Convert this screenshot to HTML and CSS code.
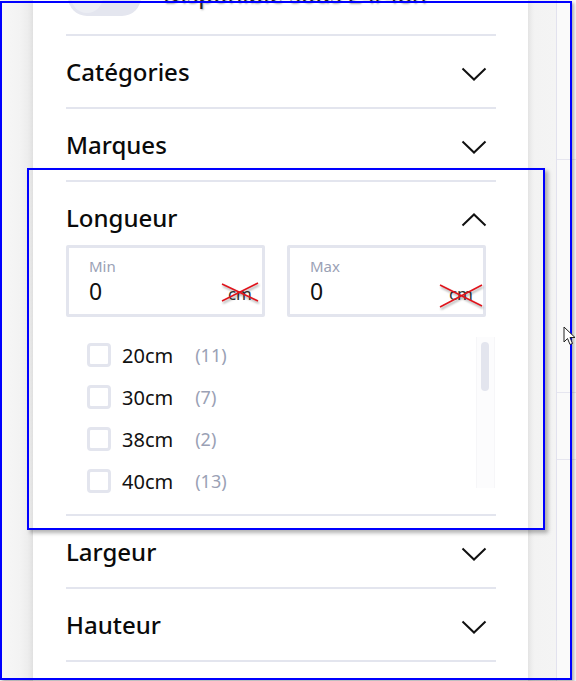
FILE: index.html
```html
<!DOCTYPE html>
<html lang="fr">
<head>
<meta charset="utf-8">
<title>Filtres</title>
<link rel="stylesheet" href="styles.css">
</head>
<body>
<div class="screen">
  <div class="gutter-left"></div>
  <div class="panel">
    <div class="toggle-row">
      <span class="toggle"><span class="knob"></span></span>
      <span class="toggle-label">Disponible sous 24/48h</span>
    </div>

    <div class="section">
      <div class="section-head">
        <span class="section-title">Catégories</span>
        <svg class="chevron" width="26" height="14" viewBox="0 0 26 14"><path d="M1.5 1.5 L13 12.5 L24.5 1.5" fill="none" stroke="#111" stroke-width="2"/></svg>
      </div>
    </div>

    <div class="section">
      <div class="section-head">
        <span class="section-title">Marques</span>
        <svg class="chevron" width="26" height="14" viewBox="0 0 26 14"><path d="M1.5 1.5 L13 12.5 L24.5 1.5" fill="none" stroke="#111" stroke-width="2"/></svg>
      </div>
    </div>

    <div class="section open">
      <div class="section-head head-open">
        <span class="section-title">Longueur</span>
        <svg class="chevron" width="26" height="14" viewBox="0 0 26 14"><path d="M1.5 12.5 L13 1.5 L24.5 12.5" fill="none" stroke="#111" stroke-width="2"/></svg>
      </div>
      <div class="range">
        <div class="field">
          <span class="field-label">Min</span>
          <div class="field-row">
            <span class="field-value">0</span>
            <span class="unit">cm</span>
          </div>
          <svg class="strike strike-min" width="40" height="22" viewBox="0 0 40 22"><path d="M2 20 L38 2 M2 3 L38 20" stroke="#e0141c" stroke-width="1.6" fill="none"/></svg>
        </div>
        <div class="field">
          <span class="field-label">Max</span>
          <div class="field-row">
            <span class="field-value">0</span>
            <span class="unit">cm</span>
          </div>
          <svg class="strike strike-max" width="46" height="26" viewBox="0 0 46 26"><path d="M2 24 L44 2 M2 2 L44 23" stroke="#e0141c" stroke-width="1.6" fill="none"/></svg>
        </div>
      </div>
      <div class="options">
        <ul class="option-list">
          <li class="option"><span class="checkbox"></span><span class="option-label">20cm</span><span class="option-count">(11)</span></li>
          <li class="option"><span class="checkbox"></span><span class="option-label">30cm</span><span class="option-count">(7)</span></li>
          <li class="option"><span class="checkbox"></span><span class="option-label">38cm</span><span class="option-count">(2)</span></li>
          <li class="option"><span class="checkbox"></span><span class="option-label">40cm</span><span class="option-count">(13)</span></li>
        </ul>
        <div class="scrollbar"><div class="thumb"></div></div>
      </div>
    </div>

    <div class="section">
      <div class="section-head">
        <span class="section-title">Largeur</span>
        <svg class="chevron" width="26" height="14" viewBox="0 0 26 14"><path d="M1.5 1.5 L13 12.5 L24.5 1.5" fill="none" stroke="#111" stroke-width="2"/></svg>
      </div>
    </div>

    <div class="section">
      <div class="section-head">
        <span class="section-title">Hauteur</span>
        <svg class="chevron" width="26" height="14" viewBox="0 0 26 14"><path d="M1.5 1.5 L13 12.5 L24.5 1.5" fill="none" stroke="#111" stroke-width="2"/></svg>
      </div>
    </div>
    <div class="section"></div>
  </div>
  <div class="gutter-right"></div>
  <div class="sidebar">
    <div class="sidebar-cell c1"></div>
    <div class="sidebar-cell c2"></div>
    <div class="sidebar-cell c3"></div>
  </div>

  <div class="annot-frame"></div>
  <div class="annot-box"></div>
  <svg class="cursor" width="14" height="20" viewBox="0 0 14 20"><path d="M1 1 L1 16 L4.5 12.5 L7 18.5 L9.5 17.5 L7 11.5 L12 11.5 Z" fill="#fff" stroke="#222" stroke-width="1"/></svg>
</div>
</body>
</html>
```

FILE: styles.css
```css
* { box-sizing: border-box; }
html, body { margin: 0; padding: 0; background: #fff; }
body {
  font-family: "Noto Sans", "Open Sans", sans-serif;
  color: #111;
}
.screen {
  position: relative;
  width: 576px;
  height: 681px;
  overflow: hidden;
  display: flex;
}
.gutter-left {
  width: 33px;
  flex: none;
  background: linear-gradient(to right, #f7f7f7 0%, #f3f3f3 60%, #e9e9e9 100%);
}
.panel {
  width: 495px;
  flex: none;
  background: #fff;
  padding: 0 32px 0 33px;
  box-shadow: 0 0 6px rgba(0,0,0,0.08);
  position: relative;
  z-index: 1;
}
.gutter-right {
  width: 28px;
  flex: none;
  background: linear-gradient(to right, #ececec 0%, #f3f3f3 25%, #f4f4f4 100%);
}
.sidebar {
  width: 20px;
  flex: none;
  border-left: 1px solid #e2e2ee;
  background: #fafafa;
  display: flex;
  flex-direction: column;
}
.sidebar-cell { border-bottom: 1px solid #e6e6f0; }
.sidebar-cell.c1 { height: 160px; }
.sidebar-cell.c2 { height: 233px; }
.sidebar-cell.c3 { height: 67px; }

/* toggle row cut at top */
.toggle-row {
  height: 57px;
  margin-top: -23px;
  padding-bottom: 17px;
  display: flex;
  align-items: center;
}
.toggle {
  width: 73px;
  height: 38px;
  margin-left: 2px;
  border-radius: 19px;
  background: #e4e6ef;
  position: relative;
  flex: none;
}
.knob {
  position: absolute;
  left: 3px; top: 3px;
  width: 32px; height: 32px;
  border-radius: 50%;
  background: #eceef4;
}
.toggle-label {
  margin-left: 22px;
  margin-bottom: 6px;
  font-size: 24px;
  line-height: 30px;
  color: #222;
  text-shadow: 1px 1px 2px rgba(0,0,0,0.35);
}

.section { border-top: 2px solid #e3e5ee; }
.section-head {
  height: 71px;
  display: flex;
  align-items: center;
  justify-content: space-between;
  padding-right: 9px;
}
.section-title {
  font-size: 24px;
  font-weight: 500;
  line-height: 30px;
  color: #0a0a0a;
}
.chevron { display: block; margin-top: 5px; }
.head-open {
  height: 63px;
  align-items: flex-start;
  padding-top: 21px;
}
.head-open .chevron { margin-top: 10px; }

.range {
  display: flex;
  gap: 22px;
  padding-right: 10px;
}
.field {
  position: relative;
  width: 199px;
  height: 72px;
  border: 3px solid #e3e5ee;
  border-radius: 2px;
  padding: 8px 10px 0 20px;
  display: flex;
  flex-direction: column;
}
.field-label {
  font-size: 15px;
  line-height: 20px;
  color: #9aa1b5;
}
.field-row {
  display: flex;
  justify-content: space-between;
  align-items: baseline;
}
.field-value {
  font-size: 23px;
  line-height: 30px;
  color: #111;
}
.unit {
  font-size: 17px;
  color: #333;
}
.strike {
  position: absolute;
  filter: drop-shadow(1px 2px 1px rgba(0,0,0,0.35));
}
.strike-min { left: 151px; top: 33px; }
.strike-max { left: 148px; top: 35px; }

.options {
  position: relative;
  height: 166px;
  margin: 17px 0 14px;
  overflow: hidden;
}
.option-list {
  list-style: none;
  margin: 0;
  padding: 0;
}
.option {
  height: 42px;
  display: flex;
  align-items: center;
  padding-left: 21px;
}
.checkbox {
  width: 24px;
  height: 24px;
  border: 3px solid #e3e5ee;
  border-radius: 4px;
  flex: none;
}
.option-label {
  margin-left: 11px;
  font-size: 20px;
  color: #111;
}
.option-count {
  margin-left: 22px;
  font-size: 18px;
  color: #9aa1b5;
}
.scrollbar {
  position: absolute;
  left: 410px;
  top: 3px;
  width: 19px;
  height: 151px;
  background: #fcfcfd;
  border-left: 1px solid #f6f6f8;
  border-right: 1px solid #f6f6f8;
}
.thumb {
  margin: 5px 0 0 4px;
  width: 8px;
  height: 49px;
  border-radius: 4px;
  background: #e3e5ee;
}

/* annotation overlays */
.annot-frame {
  position: absolute;
  left: 0; top: 1px;
  width: 572px; height: 679px;
  border: 2px solid #0000ff;
  box-shadow: 2px 2px 3px rgba(0,0,0,0.3);
  z-index: 5;
  pointer-events: none;
}
.annot-box {
  position: absolute;
  left: 27px; top: 168px;
  width: 518px; height: 362px;
  border: 2px solid #0000ff;
  box-shadow: 3px 3px 4px rgba(0,0,0,0.3);
  z-index: 5;
}
.cursor {
  position: absolute;
  left: 563px; top: 326px;
  z-index: 6;
}
```
